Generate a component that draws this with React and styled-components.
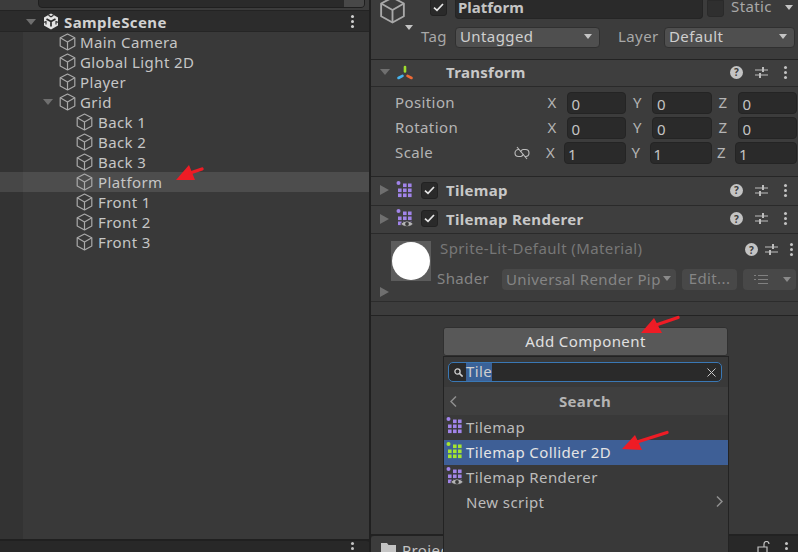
import React from "react";
import styled, { createGlobalStyle } from "styled-components";

const GlobalStyle = createGlobalStyle`
  html, body { margin: 0; padding: 0; background: #383838; }
  body { font-family: "Noto Sans", "Liberation Sans", sans-serif; overflow: hidden; }
`;

const CubeIcon = ({ size = 17 }) => (
  <svg width={size} height={size + 1} viewBox="0 0 17 18" fill="none" stroke="#a9a9a9" strokeWidth="1.2" strokeLinejoin="round">
    <path d="M8.5 1 L15.8 4.8 V13 L8.5 17 L1.2 13 V4.8 Z" />
    <path d="M1.2 4.8 L8.5 9 L15.8 4.8 M8.5 9 V17" />
  </svg>
);

const UnityLogo = () => (
  <svg width="16" height="17" viewBox="0 0 16 17">
    <path d="M8 0.5 L15 4.5 V12.5 L8 16.5 L1 12.5 V4.5 Z" fill="#e4e4e4" />
    <path d="M8 8.5 L8 13.5 M8 8.5 L3.5 6 M8 8.5 L12.5 6" stroke="#2b2b2b" strokeWidth="1.7" />
    <path d="M5.5 2.2 L8 3.8 L10.5 2.2 M0.5 9.5 L3 8.5 L3 11.5 M15.5 9.5 L13 8.5 L13 11.5" stroke="#2b2b2b" strokeWidth="1.1" fill="none" />
  </svg>
);

const TransformIcon = () => (
  <svg width="18" height="15" viewBox="0 0 18 15" fill="none" strokeLinecap="round" strokeWidth="2.6">
    <path d="M9 2 V6.5" stroke="#9fdc2e" />
    <path d="M2.5 13 L6.5 10.8" stroke="#46b4ee" />
    <path d="M11.5 10.8 L15.5 13" stroke="#ee6a36" />
  </svg>
);

const TilemapIcon = ({ color = "#a184ea", eye }) => (
  <svg width="18" height="19" viewBox="0 0 18 19" fill={color}>
    <circle cx="2.5" cy="2" r="2" />
    {[
      [6, 3], [11, 3],
      [1, 8], [6, 8], [11, 8],
      [1, 13], [6, 13], [11, 13],
    ].map(([x, y]) => (
      <rect key={`${x}-${y}`} x={x + 1} y={y - 0.5} width="3.6" height="3.6" />
    ))}
    {eye && (
      <g>
        <path d="M4.5 15 Q11 8.8 17.5 15 Q11 20.5 4.5 15 Z" fill="#b5b5b5" stroke="#383838" strokeWidth="0.8" />
        <circle cx="11" cy="15" r="1.9" fill="#383838" />
      </g>
    )}
  </svg>
);

const SlidersIcon = () => (
  <svg width="13" height="11" viewBox="0 0 13 11" fill="none" stroke="#bdbdbd" strokeWidth="1.2">
    <path d="M0 3 H13 M0 8 H13" />
    <path d="M8 0 V5 M5 6 V11" strokeWidth="2" />
  </svg>
);

const ChecklistIcon = () => (
  <svg width="14" height="11" viewBox="0 0 14 11" fill="none" stroke="#808080" strokeWidth="1.2">
    <path d="M4 1.5 H14 M4 5.5 H14 M4 9.5 H14 M0 1.5 H2 M0 5.5 H2" />
  </svg>
);

const LinkOffIcon = () => (
  <svg width="16" height="14" viewBox="0 0 16 14" fill="none" stroke="#bdbdbd" strokeWidth="1.1">
    <path d="M5 3.5 H4.5 A3.5 3.5 0 0 0 4.5 10.5 H7 A3.5 3.5 0 0 0 9.5 8" />
    <path d="M11 10.5 H11.5 A3.5 3.5 0 0 0 11.5 3.5 H9 A3.5 3.5 0 0 0 6.5 6" />
    <path d="M3 1 L13 13" />
  </svg>
);

const CheckGlyph = () => (
  <svg width="11" height="9" viewBox="0 0 11 9" fill="none" stroke="#e6e6e6" strokeWidth="1.7">
    <path d="M1 4.6 L4 7.4 L10 1" />
  </svg>
);

const SearchGlyph = () => (
  <svg width="9" height="9" viewBox="0 0 9 9" fill="none" stroke="#d0d0d0" strokeWidth="1.3">
    <circle cx="3.5" cy="3.5" r="2.6" />
    <path d="M5.5 5.5 L8.6 8.6" strokeWidth="1.6" />
  </svg>
);

const CrossGlyph = () => (
  <svg width="9" height="9" viewBox="0 0 9 9" fill="none" stroke="#c8c8c8" strokeWidth="1">
    <path d="M0.5 0.5 L8.5 8.5 M8.5 0.5 L0.5 8.5" />
  </svg>
);

const Chevron = ({ left }) => (
  <svg width="7" height="11" viewBox="0 0 7 11" fill="none" stroke="#8f8f8f" strokeWidth="1.5">
    <path d={left ? "M6 0.5 L1 5.5 L6 10.5" : "M1 0.5 L6 5.5 L1 10.5"} />
  </svg>
);

const FolderIcon = () => (
  <svg width="15" height="12" viewBox="0 0 15 12" fill="#c4c4c4">
    <path d="M0 1 H6 L7.5 3 H15 V12 H0 Z" />
  </svg>
);

const LockIcon = () => (
  <svg width="14" height="12" viewBox="0 0 14 12" fill="none" stroke="#c4c4c4" strokeWidth="1.2">
    <path d="M1 6 H10 V12 H1 Z" />
    <path d="M7 6 V3 A2.4 2.4 0 0 1 12 3" />
  </svg>
);

const RedArrow = ({ left, top, width, height, tip, head1, head2, neck, tail }) => (
  <ArrowSvg $left={left} $top={top} width={width} height={height} viewBox={`0 0 ${width} ${height}`}>
    <polygon points={`${tip} ${head1} ${head2}`} fill="#ee1c25" />
    <line x1={neck[0]} y1={neck[1]} x2={tail[0]} y2={tail[1]} stroke="#ee1c25" strokeWidth="3.4" strokeLinecap="round" />
  </ArrowSvg>
);

const Tree = [
  { name: "Main Camera", level: 1 },
  { name: "Global Light 2D", level: 1 },
  { name: "Player", level: 1 },
  { name: "Grid", level: 1, open: true },
  { name: "Back 1", level: 2 },
  { name: "Back 2", level: 2 },
  { name: "Back 3", level: 2 },
  { name: "Platform", level: 2, selected: true },
  { name: "Front 1", level: 2 },
  { name: "Front 2", level: 2 },
  { name: "Front 3", level: 2 },
];

const Hierarchy = () => (
  <LeftPanel>
    <TopStrip>
      <SearchBox>
        <SceneToggle />
      </SearchBox>
    </TopStrip>
    <SceneHeader>
      <DownArrow $size={5} $color="#6f6f6f" />
      <UnityLogo />
      <SceneName>SampleScene</SceneName>
      <Dots $color="#d0d0d0" />
    </SceneHeader>
    <TreeBody>
      {Tree.map((item) => (
        <TreeRow key={item.name} $level={item.level} $selected={item.selected}>
          <ArrowSlot>{item.open && <DownArrow $size={5} $color="#6f6f6f" />}</ArrowSlot>
          <CubeIcon />
          <RowLabel $level={item.level}>{item.name}</RowLabel>
        </TreeRow>
      ))}
    </TreeBody>
    <BottomBar>
      <Dots $color="#c4c4c4" />
    </BottomBar>
  </LeftPanel>
);

const ActionIcons = ({ tight }) => (
  <Actions $tight={tight}>
    <HelpBadge>?</HelpBadge>
    <SlidersIcon />
    <ActionDots $tight={tight}><Dots $color="#c4c4c4" /></ActionDots>
  </Actions>
);

const VectorRow = ({ label, values, wide, linkIcon }) => (
  <VectorLine>
    <FieldLabel>{label}</FieldLabel>
    {linkIcon && <LinkSlot><LinkOffIcon /></LinkSlot>}
    {["X", "Y", "Z"].map((axis, i) => (
      <AxisGroup key={axis} $wide={wide}>
        <AxisLabel $wide={wide}>{axis}</AxisLabel>
        <NumberField $wide={wide}>{values[i]}</NumberField>
      </AxisGroup>
    ))}
  </VectorLine>
);

const AddComponentMenu = () => (
  <Popup>
    <PopupSearch>
      <SearchGlyph />
      <SelectedText>Tile</SelectedText>
      <ClearSlot><CrossGlyph /></ClearSlot>
    </PopupSearch>
    <PopupTitle>
      <BackSlot><Chevron left /></BackSlot>
      Search
    </PopupTitle>
    <MenuRow>
      <MenuIconSlot><TilemapIcon /></MenuIconSlot>
      Tilemap
    </MenuRow>
    <MenuRow $active>
      <MenuIconSlot><TilemapIcon color="#a5e52f" /></MenuIconSlot>
      Tilemap Collider 2D
    </MenuRow>
    <MenuRow>
      <MenuIconSlot><TilemapIcon eye /></MenuIconSlot>
      Tilemap Renderer
    </MenuRow>
    <MenuRow>
      <MenuIconSlot />
      New script
      <NextSlot><Chevron /></NextSlot>
    </MenuRow>
  </Popup>
);

const Inspector = () => (
  <RightPanel>
    <InspectorBody>
      <ObjectHeader>
        <ObjectTop>
          <BigCube>
            <CubeIcon size={27} />
            <CornerArrow><DownArrow $size={4} $color="#c4c4c4" /></CornerArrow>
          </BigCube>
          <CheckBox $top><CheckGlyph /></CheckBox>
          <NameField>Platform</NameField>
          <StaticBox />
          <StaticLabel>Static</StaticLabel>
          <DownArrow $size={4} $color="#c4c4c4" />
        </ObjectTop>
        <TagRow>
          <TagLabel>Tag</TagLabel>
          <SelectBox $width={145}>
            Untagged
            <DownArrow $size={4} $color="#c4c4c4" />
          </SelectBox>
          <LayerLabel>Layer</LayerLabel>
          <SelectBox $width={131}>
            Default
            <DownArrow $size={4} $color="#c4c4c4" />
          </SelectBox>
        </TagRow>
      </ObjectHeader>

      <ComponentHeader $height={27}>
        <FoldArrowDown><DownArrow $size={5} $color="#6f6f6f" /></FoldArrowDown>
        <IconSlot><TransformIcon /></IconSlot>
        <CheckSpacer />
        <ComponentName>Transform</ComponentName>
        <ActionIcons />
      </ComponentHeader>
      <TransformBody>
        <VectorRow label="Position" values={[0, 0, 0]} />
        <VectorRow label="Rotation" values={[0, 0, 0]} />
        <VectorRow label="Scale" values={[1, 1, 1]} wide linkIcon />
      </TransformBody>

      <ComponentHeader $height={29}>
        <RightArrow $color="#6f6f6f" />
        <IconSlot><TilemapIcon /></IconSlot>
        <CheckBox><CheckGlyph /></CheckBox>
        <ComponentName>Tilemap</ComponentName>
        <ActionIcons />
      </ComponentHeader>
      <ComponentHeader $height={28}>
        <RightArrow $color="#6f6f6f" />
        <IconSlot><TilemapIcon eye /></IconSlot>
        <CheckBox><CheckGlyph /></CheckBox>
        <ComponentName>Tilemap Renderer</ComponentName>
        <ActionIcons />
      </ComponentHeader>

      <MaterialBlock>
        <MaterialArrow><RightArrow $color="#6f6f6f" /></MaterialArrow>
        <Thumb><ThumbBall /></Thumb>
        <MaterialInfo>
          <MaterialTitleRow>
            <MaterialTitle>Sprite-Lit-Default (Material)</MaterialTitle>
            <ActionIcons tight />
          </MaterialTitleRow>
          <ShaderRow>
            <ShaderLabel>Shader</ShaderLabel>
            <ShaderSelect>
              <ShaderText>Universal Render Pip</ShaderText>
              <DownArrow $size={4} $color="#8a8a8a" />
            </ShaderSelect>
            <EditButton>Edit...</EditButton>
            <ListButton>
              <ChecklistIcon />
              <DownArrow $size={4} $color="#8a8a8a" />
            </ListButton>
          </ShaderRow>
        </MaterialInfo>
      </MaterialBlock>
      <SpacerBand />

      <AddArea>
        <AddHolder>
          <AddButton>Add Component</AddButton>
          <AddComponentMenu />
        </AddHolder>
      </AddArea>
    </InspectorBody>
    <TabBar>
      <ProjectTab>
        <FolderIcon />
        Project
      </ProjectTab>
      <TabTools>
        <LockIcon />
        <Dots $color="#c4c4c4" />
      </TabTools>
    </TabBar>
  </RightPanel>
);

const App = () => (
  <Page>
    <GlobalStyle />
    <Hierarchy />
    <Inspector />
    <RedArrow left={174} top={163} width={32} height={20} tip={[2, 17]} head1={[15, 2]} head2={[21, 17]} neck={[16, 10]} tail={[28, 6]} />
    <RedArrow left={639} top={314} width={42} height={21} tip={[2, 19]} head1={[15, 4]} head2={[23, 19]} neck={[17, 11]} tail={[39, 3.5]} />
    <RedArrow left={620} top={429} width={50} height={23} tip={[2, 20]} head1={[15, 6]} head2={[22, 21]} neck={[17, 13]} tail={[47, 3.5]} />
  </Page>
);

export default App;

const Page = styled.div`
  position: relative;
  display: flex;
  width: 798px;
  height: 552px;
  overflow: hidden;
  background: #222;
  color: #c4c4c4;
  font-size: 15px;
  letter-spacing: 0.4px;
`;

const ArrowSvg = styled.svg`
  position: absolute;
  left: ${(p) => p.$left}px;
  top: ${(p) => p.$top}px;
  z-index: 5;
`;

const DownArrow = styled.span`
  display: inline-block;
  flex: none;
  width: 0;
  height: 0;
  border-left: ${(p) => p.$size}px solid transparent;
  border-right: ${(p) => p.$size}px solid transparent;
  border-top: ${(p) => p.$size + 1}px solid ${(p) => p.$color};
`;

const RightArrow = styled.span`
  display: inline-block;
  flex: none;
  width: 0;
  height: 0;
  border-top: 5px solid transparent;
  border-bottom: 5px solid transparent;
  border-left: 9px solid ${(p) => p.$color};
`;

const Dots = styled.span`
  display: inline-block;
  flex: none;
  width: 3px;
  height: 3px;
  border-radius: 50%;
  background: ${(p) => p.$color};
  box-shadow: 0 -5px 0 ${(p) => p.$color}, 0 5px 0 ${(p) => p.$color};
`;

const LeftPanel = styled.div`
  display: flex;
  flex-direction: column;
  width: 370px;
  flex: none;
  height: 552px;
  background: #202020;
`;

const TopStrip = styled.div`
  height: 10px;
  padding: 0 5px 0 38px;
  flex: none;
  display: flex;
  align-items: flex-end;
  overflow: hidden;
  background: #3c3c3c;
  border-bottom: 1px solid #232323;
`;

const SearchBox = styled.div`
  position: relative;
  height: 24px;
  margin-bottom: 2px;
  flex: 1;
  background: #2a2a2a;
  border: 1px solid #1f1f1f;
  border-radius: 4px;
  overflow: hidden;
  display: flex;
  justify-content: flex-end;
`;

const SceneToggle = styled.div`
  width: 20px;
  height: 24px;
  background: #484848;
`;

const SceneHeader = styled.div`
  display: flex;
  align-items: center;
  flex: none;
  padding: 1px 16px 0 26px;
  height: 19px;
  background: #2c2c2c;
  border-bottom: 1px solid #252525;
  & > svg {
    margin-left: 7px;
  }
`;

const SceneName = styled.span`
  flex: 1;
  margin-left: 5px;
  font-weight: 700;
  color: #d2d2d2;
`;

const TreeBody = styled.div`
  flex: 1;
  background: linear-gradient(to right, #333 23px, #393939 23px);
  margin-bottom: 2px;
`;

const TreeRow = styled.div`
  display: flex;
  align-items: center;
  height: 20px;
  padding-left: ${(p) => (p.$level === 1 ? 43 : 60)}px;
  background: ${(p) => (p.$selected ? "linear-gradient(to right, #474747 23px, #4d4d4d 23px)" : "transparent")};
`;

const ArrowSlot = styled.span`
  display: flex;
  width: 16px;
  flex: none;
`;

const RowLabel = styled.span`
  margin-left: ${(p) => (p.$level === 1 ? 4 : 5)}px;
  color: #c6c6c6;
  white-space: nowrap;
`;

const BottomBar = styled.div`
  height: 11px;
  flex: none;
  padding: 6px 16px 0 0;
  box-sizing: border-box;
  display: flex;
  justify-content: flex-end;
  background: #282828;
  border-top-right-radius: 4px;
`;

const RightPanel = styled.div`
  display: flex;
  flex-direction: column;
  flex: none;
  box-sizing: border-box;
  width: 429px;
  height: 552px;
  border-left: 2px solid #202020;
  margin-left: -1px;
`;

const InspectorBody = styled.div`
  flex: 1;
  display: flex;
  flex-direction: column;
  background: #3c3c3c;
  min-height: 0;
  margin-bottom: 2px;
`;

const ObjectHeader = styled.div`
  height: 60px;
  box-sizing: border-box;
  flex: none;
  display: flex;
  flex-direction: column;
  border-bottom: 1px solid #232323;
`;

const ObjectTop = styled.div`
  display: flex;
  align-items: flex-start;
  height: 27px;
  padding: 0 5px 0 8px;
  & > span:last-child {
    margin: 5px 0 0 auto;
  }
`;

const BigCube = styled.div`
  position: relative;
  width: 27px;
  height: 27px;
  overflow: visible;
  margin-top: -4px;
  flex: none;
  svg {
    display: block;
  }
`;

const CornerArrow = styled.span`
  position: absolute;
  left: 26px;
  top: 29px;
  display: flex;
`;

const CheckBox = styled.span`
  display: flex;
  align-items: center;
  justify-content: center;
  flex: none;
  width: 15px;
  height: ${(p) => (p.$top ? 16 : 15)}px;
  margin-left: ${(p) => (p.$top ? 24 : 4)}px;
  background: #2a2a2a;
  border: 1px solid #222;
  border-radius: 3px;
  box-sizing: content-box;
  ${(p) => p.$top && "margin-top: -2px;"}
`;

const NameField = styled.div`
  width: 248px;
  height: 19px;
  margin-left: 8px;
  padding-left: 2px;
  box-sizing: border-box;
  line-height: 14px;
  font-weight: 700;
  letter-spacing: 0;
  color: #c4c4c4;
  background: #2a2a2a;
  border-radius: 0 0 4px 4px;
  border: 1px solid #252525;
  border-top: none;
`;

const StaticBox = styled.span`
  width: 17px;
  height: 17px;
  margin-left: 4px;
  flex: none;
  box-sizing: border-box;
  background: #2f2f2f;
  border: 1px solid #2a2a2a;
  border-radius: 0 0 3px 3px;
`;

const StaticLabel = styled.span`
  margin: -4px 0 0 7px;
  line-height: 20px;
  color: #a8a8a8;
`;

const TagRow = styled.div`
  display: flex;
  align-items: center;
  height: 21px;
  padding-left: 50px;
`;

const TagLabel = styled.span`
  width: 34px;
  margin-top: -3px;
  color: #a8a8a8;
`;

const LayerLabel = styled.span`
  width: 46px;
  margin: -3px 0 0 18px;
  color: #a8a8a8;
`;

const SelectBox = styled.div`
  display: flex;
  align-items: center;
  justify-content: space-between;
  box-sizing: border-box;
  width: ${(p) => p.$width}px;
  height: 21px;
  padding: 0 7px 3px 4px;
  background: #4f4f4f;
  border: 1px solid #303030;
  border-radius: 4px;
  color: #cfcfcf;
`;

const ComponentHeader = styled.div`
  display: flex;
  align-items: center;
  flex: none;
  box-sizing: border-box;
  height: ${(p) => p.$height}px;
  padding: 0 0 2px 9px;
  background: #3e3e3e;
  border-bottom: 1px solid #2a2a2a;
`;

const FoldArrowDown = styled.span`
  display: flex;
  width: 9px;
  flex: none;
`;

const IconSlot = styled.span`
  display: flex;
  justify-content: center;
  width: 24px;
  margin-left: 4px;
  flex: none;
`;

const CheckSpacer = styled.span`
  width: 21px;
  flex: none;
`;

const ComponentName = styled.span`
  flex: 1;
  margin-left: 8px;
  font-weight: 700;
  letter-spacing: 0.3px;
  color: #c8c8c8;
`;

const Actions = styled.span`
  display: flex;
  align-items: center;
  gap: ${(p) => (p.$tight ? 7 : 12)}px;
  padding-right: ${(p) => (p.$tight ? 5 : 11)}px;
`;

const ActionDots = styled.span`
  display: flex;
  margin-left: ${(p) => (p.$tight ? 5 : 4)}px;
`;

const HelpBadge = styled.span`
  display: flex;
  align-items: center;
  justify-content: center;
  width: 13px;
  height: 13px;
  border-radius: 50%;
  background: #c4c4c4;
  color: #3c3c3c;
  font-size: 10px;
  font-weight: 700;
  line-height: 1;
  letter-spacing: 0;
`;

const TransformBody = styled.div`
  display: flex;
  flex-direction: column;
  flex: none;
  height: 90px;
  box-sizing: border-box;
  padding: 5px 1px 0 24px;
  gap: 3px;
  border-bottom: 1px solid #262626;
`;

const VectorLine = styled.div`
  display: flex;
  align-items: center;
  height: 22px;
`;

const FieldLabel = styled.span`
  flex: 1;
  margin-top: -2px;
  color: #b4b4b4;
`;

const LinkSlot = styled.span`
  display: flex;
  margin-right: 11px;
`;

const AxisGroup = styled.div`
  display: flex;
  align-items: center;
  flex: none;
  width: ${(p) => (p.$wide ? 80 : 78.5)}px;
  margin-left: ${(p) => (p.$wide ? 5.5 : 7)}px;
`;

const AxisLabel = styled.span`
  width: ${(p) => (p.$wide ? 18 : 19)}px;
  flex: none;
  margin-top: -2px;
  color: #b4b4b4;
`;

const NumberField = styled.div`
  box-sizing: border-box;
  flex: 1;
  height: 22px;
  line-height: 23px;
  padding-left: ${(p) => (p.$wide ? 3 : 4)}px;
  background: #2a2a2a;
  border: 1px solid #242424;
  border-radius: 4px;
  color: #c4c4c4;
`;

const MaterialBlock = styled.div`
  position: relative;
  display: flex;
  flex: none;
  height: 68px;
  box-sizing: border-box;
  padding: 7px 0 0 20px;
  border-bottom: 1px solid #2c2c2c;
`;

const MaterialArrow = styled.span`
  position: absolute;
  left: 9px;
  top: 47px;
`;

const Thumb = styled.div`
  display: flex;
  align-items: center;
  justify-content: center;
  width: 40px;
  height: 40px;
  flex: none;
  background: #5c5c5c;
`;

const ThumbBall = styled.div`
  width: 38px;
  height: 38px;
  border-radius: 50%;
  background: #fff;
`;

const MaterialInfo = styled.div`
  flex: 1;
  display: flex;
  flex-direction: column;
  margin-left: 6px;
`;

const MaterialTitleRow = styled.div`
  display: flex;
  align-items: center;
  height: 17px;
  padding-left: 3px;
  margin-bottom: 11px;
`;

const MaterialTitle = styled.span`
  flex: 1;
  margin-top: -3px;
  color: #777;
`;

const ShaderRow = styled.div`
  display: flex;
  align-items: center;
  height: 21px;
  color: #858585;
`;

const ShaderLabel = styled.span`
  width: 65px;
  flex: none;
  margin-top: -3px;
`;

const ShaderSelect = styled.div`
  display: flex;
  align-items: center;
  gap: 1px;
  box-sizing: border-box;
  width: 174px;
  height: 21px;
  padding: 0 5px 2px 4px;
  background: #484848;
  border-radius: 4px;
`;

const ShaderText = styled.span`
  flex: 1;
  overflow: hidden;
  white-space: nowrap;
`;

const EditButton = styled.div`
  box-sizing: border-box;
  width: 55px;
  height: 21px;
  margin-left: 6px;
  line-height: 18px;
  text-align: center;
  background: #484848;
  border-radius: 4px;
`;

const ListButton = styled.div`
  display: flex;
  align-items: center;
  justify-content: space-between;
  box-sizing: border-box;
  width: 53px;
  height: 21px;
  margin-left: 6px;
  padding: 0 5px 0 11px;
  background: #484848;
  border-radius: 4px;
`;

const SpacerBand = styled.div`
  flex: none;
  height: 14px;
  box-sizing: border-box;
  border-bottom: 1px solid #232323;
`;

const AddArea = styled.div`
  flex: 1;
  display: flex;
  padding: 11px 0 0 72px;
  background: #393939;
`;

const AddHolder = styled.div`
  position: relative;
  width: 285px;
`;

const AddButton = styled.div`
  box-sizing: border-box;
  height: 29px;
  line-height: 26px;
  text-align: center;
  color: #e0e0e0;
  background: #585858;
  border-radius: 3px;
  border: 1px solid #303030;
`;

const Popup = styled.div`
  position: absolute;
  left: 0;
  top: 29px;
  z-index: 3;
  box-sizing: border-box;
  width: 286px;
  height: 200px;
  background: #393939;
  border: 1px solid #232323;
  padding-top: 5px;
`;

const PopupSearch = styled.div`
  display: flex;
  align-items: center;
  box-sizing: border-box;
  width: 274px;
  height: 20px;
  margin-left: 4px;
  padding: 0 5px;
  background: #2a2a2a;
  border: 1px solid #3a78b5;
  border-radius: 5px;
`;

const SelectedText = styled.span`
  margin-left: 3px;
  line-height: 16px;
  height: 18px;
  background: #3a6298;
  color: #cfcfcf;
`;

const ClearSlot = styled.span`
  display: flex;
  margin-left: auto;
`;

const PopupTitle = styled.div`
  position: relative;
  height: 28px;
  margin-top: 5px;
  padding-right: 2px;
  line-height: 28px;
  text-align: center;
  font-weight: 700;
  letter-spacing: 0.3px;
  color: #b4b4b4;
  background: #3f3f3f;
`;

const BackSlot = styled.span`
  position: absolute;
  left: 6px;
  top: 9px;
  display: flex;
`;

const MenuRow = styled.div`
  display: flex;
  align-items: center;
  box-sizing: border-box;
  height: 25px;
  padding-bottom: 2px;
  color: ${(p) => (p.$active ? "#e4e4e4" : "#bcbcbc")};
  background: ${(p) => (p.$active ? "#3e5f96" : "transparent")};
`;

const MenuIconSlot = styled.span`
  display: flex;
  width: 18px;
  margin: 0 2px 0 2px;
  flex: none;
`;

const NextSlot = styled.span`
  display: flex;
  margin-left: auto;
  margin-right: 5px;
`;

const TabBar = styled.div`
  display: flex;
  justify-content: space-between;
  flex: none;
  height: 16px;
  background: #282828;
`;

const ProjectTab = styled.div`
  display: flex;
  align-items: flex-start;
  gap: 6px;
  box-sizing: border-box;
  width: 80px;
  height: 16px;
  padding: 4px 0 0 10px;
  line-height: 20px;
  background: #3c3c3c;
  border-radius: 3px 3px 0 0;
  overflow: hidden;
  & > svg {
    flex: none;
    margin-top: 2px;
  }
`;

const TabTools = styled.div`
  display: flex;
  align-items: flex-start;
  gap: 14px;
  padding: 5px 10px 0 0;
  & > span {
    margin-top: 6px;
  }
`;
